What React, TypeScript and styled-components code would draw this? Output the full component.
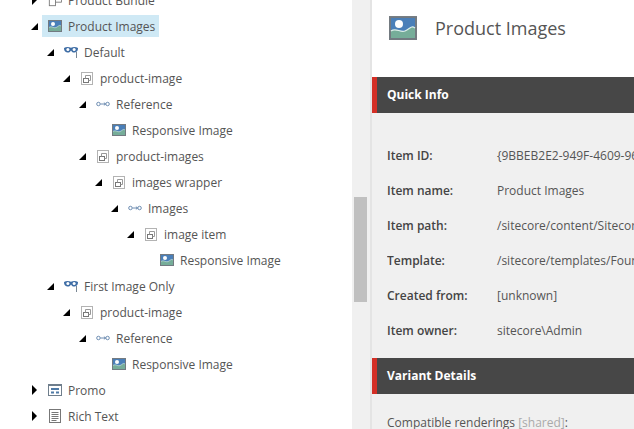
import styled, { createGlobalStyle } from "styled-components";

type IconKind = "bundle" | "image" | "variant" | "rendering" | "reference" | "promo" | "text";

type TreeRow = {
  label: string;
  level: number;
  icon: IconKind;
  arrow?: "open" | "closed";
  selected?: boolean;
};

const rows: TreeRow[] = [
  { label: "Product Bundle", level: 0, icon: "bundle", arrow: "closed" },
  { label: "Product Images", level: 0, icon: "image", arrow: "open", selected: true },
  { label: "Default", level: 1, icon: "variant", arrow: "open" },
  { label: "product-image", level: 2, icon: "rendering", arrow: "open" },
  { label: "Reference", level: 3, icon: "reference", arrow: "open" },
  { label: "Responsive Image", level: 4, icon: "image" },
  { label: "product-images", level: 3, icon: "rendering", arrow: "open" },
  { label: "images wrapper", level: 4, icon: "rendering", arrow: "open" },
  { label: "Images", level: 5, icon: "reference", arrow: "open" },
  { label: "image item", level: 6, icon: "rendering", arrow: "open" },
  { label: "Responsive Image", level: 7, icon: "image" },
  { label: "First Image Only", level: 1, icon: "variant", arrow: "open" },
  { label: "product-image", level: 2, icon: "rendering", arrow: "open" },
  { label: "Reference", level: 3, icon: "reference", arrow: "open" },
  { label: "Responsive Image", level: 4, icon: "image" },
  { label: "Promo", level: 0, icon: "promo", arrow: "closed" },
  { label: "Rich Text", level: 0, icon: "text", arrow: "closed" },
];

const info = [
  { label: "Item ID:", value: "{9BBEB2E2-949F-4609-96" },
  { label: "Item name:", value: "Product Images" },
  { label: "Item path:", value: "/sitecore/content/Sitecore" },
  { label: "Template:", value: "/sitecore/templates/Foundation" },
  { label: "Created from:", value: "[unknown]" },
  { label: "Item owner:", value: "sitecore\\Admin" },
];

function ImageIcon({ size }: { size: number }) {
  return (
    <svg width={size} height={size * 0.86} viewBox="0 0 28 24">
      <rect x="0" y="0" width="28" height="24" fill="#737a80" />
      <rect x="2" y="2" width="24" height="20" fill="#4a7fb8" />
      <circle cx="10" cy="8" r="4" fill="#fdfdfd" />
      <path d="M2 15C7 11 11 17 16 15S22 9 26 12V22H2Z" fill="#76ad99" />
      <path d="M2 15C7 11 11 17 16 15S22 9 26 12" fill="none" stroke="#dff0ea" strokeWidth="1.2" />
    </svg>
  );
}

function TreeIcon({ kind }: { kind: IconKind }) {
  if (kind === "image") return <ImageIcon size={14} />;
  if (kind === "variant") {
    return (
      <svg width="14" height="12" viewBox="0 0 14 12">
        <path
          d="M0 2C2 0.5 5 0.6 7 1.8 9 0.6 12 0.5 14 2 14 5.5 12 6.5 10 6.5 8.6 6.5 7.6 5.4 7 4.4 6.4 5.4 5.4 6.5 4 6.5 2 6.5 0 5.5 0 2Z"
          fill="#3f6ea6"
        />
        <circle cx="3.9" cy="3.4" r="1.5" fill="#fff" />
        <circle cx="10.1" cy="3.4" r="1.5" fill="#fff" />
        <path d="M12.5 6V12" stroke="#7a8794" strokeWidth="1" />
      </svg>
    );
  }
  if (kind === "rendering") {
    return (
      <svg width="12" height="13" viewBox="0 0 12 13" fill="none">
        <rect x="0.5" y="0.5" width="11" height="12" stroke="#666" strokeDasharray="1 1" />
        <rect x="2.5" y="6.5" width="5" height="4" stroke="#777" />
        <path d="M4.5 6.5V3.5H9.5V8.5H7.5" stroke="#999" />
      </svg>
    );
  }
  if (kind === "reference") {
    return (
      <svg width="16" height="8" viewBox="0 0 16 8" fill="none" stroke="#5b7fa8">
        <circle cx="2.8" cy="4" r="2" />
        <circle cx="13.2" cy="4" r="2" />
        <path d="M5 4H11M9 2.4L10.8 4 9 5.6" />
      </svg>
    );
  }
  if (kind === "bundle") {
    return (
      <svg width="16" height="16" viewBox="0 0 16 16" fill="none" stroke="#777">
        <rect x="1.5" y="7.5" width="7" height="7" />
        <path d="M5 7.5V3.5H15.5V10.5H8.5" />
      </svg>
    );
  }
  if (kind === "promo") {
    return (
      <svg width="14" height="12" viewBox="0 0 14 12" fill="none">
        <rect x="0.5" y="0.5" width="13" height="11" stroke="#6f7e8c" />
        <rect x="0" y="0" width="14" height="2" fill="#6f7e8c" />
        <rect x="3" y="4" width="8" height="2" fill="#4f7aa6" />
        <rect x="3" y="7.5" width="3" height="2" fill="#4f7aa6" />
        <rect x="8" y="7.5" width="3" height="2" fill="#4f7aa6" />
      </svg>
    );
  }
  return (
    <svg width="12" height="14" viewBox="0 0 12 14" fill="none" stroke="#777">
      <rect x="0.5" y="0.5" width="11" height="13" />
      <path d="M2.5 3.5H9.5M2.5 5.5H9.5M2.5 7.5H9.5M2.5 9.5H9.5M2.5 11.5H7.5" />
    </svg>
  );
}

function Arrow({ type }: { type: "open" | "closed" }) {
  return type === "open" ? (
    <svg width="7" height="7" viewBox="0 0 7 7">
      <path d="M7 0V7H0Z" fill="#000" />
    </svg>
  ) : (
    <svg width="7" height="10" viewBox="0 0 7 10">
      <path d="M1 0L6 5 1 10Z" fill="#000" />
    </svg>
  );
}

export default function App() {
  return (
    <>
      <GlobalStyle />
      <Page>
        <Tree>
          {rows.map((row, index) => (
            <Row key={index} $level={row.level}>
              <ArrowSlot>{row.arrow && <Arrow type={row.arrow} />}</ArrowSlot>
              <Node $selected={row.selected}>
                <IconSlot>
                  <TreeIcon kind={row.icon} />
                </IconSlot>
                <span>{row.label}</span>
              </Node>
            </Row>
          ))}
        </Tree>
        <Gutter>
          <Thumb />
        </Gutter>
        <Content>
          <Header>
            <ImageIcon size={28} />
            <Title>Product Images</Title>
          </Header>
          <SectionBar>Quick Info</SectionBar>
          <InfoList>
            {info.map((item) => (
              <InfoRow key={item.label}>
                <InfoLabel>{item.label}</InfoLabel>
                <InfoValue>{item.value}</InfoValue>
              </InfoRow>
            ))}
          </InfoList>
          <SectionBar>Variant Details</SectionBar>
          <Compatible>
            Compatible renderings <Shared>[shared]</Shared>:
          </Compatible>
        </Content>
      </Page>
    </>
  );
}

const GlobalStyle = createGlobalStyle`
  html, body {
    margin: 0;
    padding: 0;
    background: #fff;
  }
  body {
    font-family: "Open Sans", "Liberation Sans", sans-serif;
    font-size: 12px;
    overflow: hidden;
  }
`;

const Page = styled.div`
  display: flex;
  width: 634px;
  height: 429px;
  overflow: hidden;
`;

const Tree = styled.div`
  width: 352px;
  flex: none;
  margin-top: -13px;
  background: #fff;
`;

const Row = styled.div<{ $level: number }>`
  display: flex;
  align-items: center;
  height: 26px;
  padding-left: ${({ $level }) => 31 + $level * 16}px;
`;

const ArrowSlot = styled.div`
  width: 11px;
  height: 26px;
  flex: none;
  display: flex;
  align-items: center;
`;

const Node = styled.div<{ $selected?: boolean }>`
  display: flex;
  align-items: center;
  height: 22px;
  padding: 0 4px 0 6px;
  color: #555;
  white-space: nowrap;
  background: ${({ $selected }) => ($selected ? "#cfe9f5" : "transparent")};
`;

const IconSlot = styled.div`
  width: 14px;
  margin-right: 6px;
  display: flex;
  align-items: center;
  justify-content: center;
`;

const Gutter = styled.div`
  width: 20px;
  flex: none;
  box-sizing: border-box;
  padding-left: 2px;
  background: #f0f0f0;
  border-right: 2px solid #e4e4e4;
`;

const Thumb = styled.div`
  width: 13px;
  height: 105px;
  margin-top: 197px;
  background: #c0c0c0;
`;

const Content = styled.div`
  flex: 1;
  min-width: 0;
  background: #f0f0f0;
`;

const Header = styled.div`
  display: flex;
  align-items: center;
  gap: 18px;
  height: 77px;
  padding: 0 0 21px 17px;
  box-sizing: border-box;
  background: #fff;
`;

const Title = styled.div`
  font-size: 18px;
  color: #555;
  white-space: nowrap;
`;

const SectionBar = styled.div`
  height: 36px;
  line-height: 35px;
  box-sizing: border-box;
  padding-left: 10px;
  border-left: 5px solid #d32f26;
  background: #474747;
  color: #fff;
  font-size: 12px;
  font-weight: 700;
`;

const InfoList = styled.div`
  padding: 25px 0 10px 15px;
`;

const InfoRow = styled.div`
  display: flex;
  align-items: center;
  height: 35px;
  white-space: nowrap;
  overflow: hidden;
`;

const InfoLabel = styled.div`
  width: 110px;
  flex: none;
  font-weight: 600;
  color: #444;
`;

const InfoValue = styled.div`
  color: #555;
`;

const Compatible = styled.div`
  padding: 20px 0 0 15px;
  color: #555;
  white-space: nowrap;
`;

const Shared = styled.span`
  color: #aaa;
`;
